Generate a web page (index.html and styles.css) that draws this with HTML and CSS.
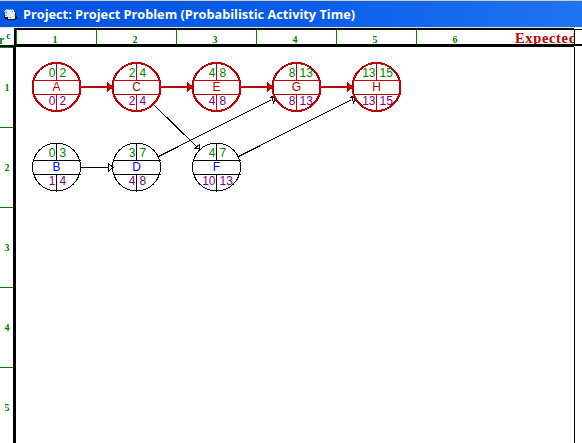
FILE: index.html
```
<!DOCTYPE html>
<html lang="en">
<head>
<meta charset="utf-8">
<title>Project: Project Problem (Probabilistic Activity Time)</title>
<link rel="stylesheet" href="styles.css">
</head>
<body>
<div class="window">
  <header class="titlebar">
    <svg class="app-icon" width="14" height="14" viewBox="0 0 14 14" shape-rendering="crispEdges">
      <path d="M1 2h9v2h1v5h1v2H3V9H1z" fill="#e4e8e8"/>
      <path d="M2 1h3v1H2zM6 1h3v1H6zM0 3h2v1H0zM1 7h2v1H1z" fill="#20d8e8"/>
      <path d="M0 7h1v2h3v2H1v-1H0zM3 11h9v1H3zM11 5h1v3h1v2h1v1h-3z" fill="#101820"/>
      <path d="M2 4h1v2H2zM8 3h1v1H8zM5 9h2v1H5z" fill="#8b9aa0"/>
    </svg>
    <svg class="title" width="340" height="24"><text x="0" y="17" textLength="332" lengthAdjust="spacingAndGlyphs">Project: Project Problem (Probabilistic Activity Time)</text></svg>
  </header>
  <div class="ruler">
    <div class="corner"><span>r</span><sup>c</sup></div>
    <div class="columns">
      <span>1</span><span>2</span><span>3</span><span>4</span><span>5</span>
      <span class="last">6</span><b class="expected">Expected</b>
    </div>
    <div class="ruler-end"></div>
  </div>
  <main class="chart">
    <div class="rows"><span>1</span><span>2</span><span>3</span><span>4</span><span>5</span></div>
    <svg class="network" width="558" height="396" viewBox="16 47 558 396">
      <g class="critical-link">
        <path d="M81 87H110M161 87H190M241 87H270M321 87H350"/>
        <path class="head" d="M108 84l4 3-4 3zM188 84l4 3-4 3zM268 84l4 3-4 3zM348 84l4 3-4 3z"/>
      </g>
      <g class="link">
        <path d="M81 167.500H108M153.500 104.500L197 147M158.500 156.500L271 100M238.500 156.500L351 100"/>
        <path d="M108.500 163.500l4.500 4-4.500 4zM194.500 148.500h5v-4zM199.500 144.500v6M271.500 96.500l4 2-2 4zM351.500 96.500l4 2-2 4zM269.500 97.500h5M349.500 97.500h5"/>
      </g>
      <g class="critical">
        <g transform="translate(56.500 87)"><circle r="24"/><path d="M-24-6.500H24M-24 7.500H24M0-24V-6M0 7V24"/><text class="name" y="4">A</text><text class="early end" x="-1" y="-10">0</text><text class="early" x="3" y="-10">2</text><text class="late end" x="-1" y="18">0</text><text class="late" x="3" y="18">2</text></g>
        <g transform="translate(136.500 87)"><circle r="24"/><path d="M-24-6.500H24M-24 7.500H24M0-24V-6M0 7V24"/><text class="name" y="4">C</text><text class="early end" x="-1" y="-10">2</text><text class="early" x="3" y="-10">4</text><text class="late end" x="-1" y="18">2</text><text class="late" x="3" y="18">4</text></g>
        <g transform="translate(216.500 87)"><circle r="24"/><path d="M-24-6.500H24M-24 7.500H24M0-24V-6M0 7V24"/><text class="name" y="4">E</text><text class="early end" x="-1" y="-10">4</text><text class="early" x="3" y="-10">8</text><text class="late end" x="-1" y="18">4</text><text class="late" x="3" y="18">8</text></g>
        <g transform="translate(296.500 87)"><circle r="24"/><path d="M-24-6.500H24M-24 7.500H24M0-24V-6M0 7V24"/><text class="name" y="4">G</text><text class="early end" x="-1" y="-10">8</text><text class="early" x="3" y="-10">13</text><text class="late end" x="-1" y="18">8</text><text class="late" x="3" y="18">13</text></g>
        <g transform="translate(376.500 87)"><circle r="24"/><path d="M-24-6.500H24M-24 7.500H24M0-24V-6M0 7V24"/><text class="name" y="4">H</text><text class="early end" x="-1" y="-10">13</text><text class="early" x="3" y="-10">15</text><text class="late end" x="-1" y="18">13</text><text class="late" x="3" y="18">15</text></g>
      </g>
      <g class="normal">
        <g transform="translate(56.500 167)"><circle r="24"/><path d="M-24-6.500H24M-24 7.500H24M0-24V-6M0 7V24"/><text class="name" y="4">B</text><text class="early end" x="-1" y="-10">0</text><text class="early" x="3" y="-10">3</text><text class="late end" x="-1" y="18">1</text><text class="late" x="3" y="18">4</text></g>
        <g transform="translate(136.500 167)"><circle r="24"/><path d="M-24-6.500H24M-24 7.500H24M0-24V-6M0 7V24"/><text class="name" y="4">D</text><text class="early end" x="-1" y="-10">3</text><text class="early" x="3" y="-10">7</text><text class="late end" x="-1" y="18">4</text><text class="late" x="3" y="18">8</text></g>
        <g transform="translate(216.500 167)"><circle r="24"/><path d="M-24-6.500H24M-24 7.500H24M0-24V-6M0 7V24"/><text class="name" y="4">F</text><text class="early end" x="-1" y="-10">4</text><text class="early" x="3" y="-10">7</text><text class="late end" x="-1" y="18">10</text><text class="late" x="3" y="18">13</text></g>
      </g>
    </svg>
    <div class="edge"></div>
  </main>
</div>
</body>
</html>
```
FILE: styles.css
```
* { box-sizing: border-box; }
body { margin: 0; background: #fff; overflow: hidden; }
.window { width: 582px; height: 443px; overflow: hidden; }

.titlebar {
  display: flex;
  height: 28px;
  padding: 1px 0 0 4px;
  border-top: 1px solid #d4d0c8;
  border-bottom: 1px solid #d9e4f6;
  background: linear-gradient(90deg, #0055e2, #0a5ce8 50%, #1f74f2);
}
.app-icon { margin: 6px 5px 0 0; }
.title text { font: bold 13px "Open Sans", "Noto Sans", sans-serif; fill: #fff; }

.ruler {
  display: flex;
  height: 19px;
  font: bold 10px "Liberation Serif", serif;
  color: #008000;
}
.corner {
  display: flex;
  flex: none;
  width: 14px;
  height: 19px;
  padding-top: 6px;
  border-bottom: 2px solid #000;
  line-height: 12px;
}
.corner span { font-size: 12px; margin-left: -1px; }
.corner sup { margin: -4px 0 0 2px; font-size: 10px; line-height: 12px; }
.columns {
  display: flex;
  flex: none;
  width: 560px;
  border: solid #000;
  border-width: 2px 0 3px 2px;
  overflow: hidden;
}
.columns span {
  flex: none;
  width: 80px;
  border-left: 1px solid #008000;
  padding-right: 3px;
  line-height: 20px;
  text-align: center;
}
.columns .expected {
  flex: none;
  margin-left: 19px;
  font-size: 14.5px;
  font-weight: bold;
  line-height: 16px;
  color: #c00000;
  letter-spacing: .65px;
}
.ruler-end {
  flex: none;
  width: 8px;
  height: 17px;
  margin-top: 1px;
  border: solid #000;
  border-width: 1px 0 2px 1px;
}

.chart { display: flex; height: 396px; }
.rows {
  flex: none;
  width: 16px;
  border-right: 3px solid #000;
  font: bold 10px "Liberation Serif", serif;
  color: #008000;
}
.rows span {
  display: block;
  height: 80px;
  border-top: 1px solid #008000;
  padding-left: 4.500px;
  line-height: 80px;
}
.network { display: block; flex: none; }
.edge { width: 8px; border-left: 1px solid #000; }

.network circle, .network path { fill: none; shape-rendering: crispEdges; }
.critical circle { stroke: #c00000; stroke-width: 2; }
.critical path { stroke: #c00000; stroke-width: 1; }
.normal circle, .normal path, .link path { stroke: #000; stroke-width: 1; }
.critical-link path { stroke: #c00000; stroke-width: 2; }
.network .critical-link .head { fill: #c00000; }
.network text { font: 12px "Liberation Sans", sans-serif; }
.network .name { text-anchor: middle; }
.critical .name { fill: #c00000; }
.normal .name { fill: #00f; }
.network .early { fill: #008000; }
.network .late { fill: #800080; }
.network .end { text-anchor: end; }
```
